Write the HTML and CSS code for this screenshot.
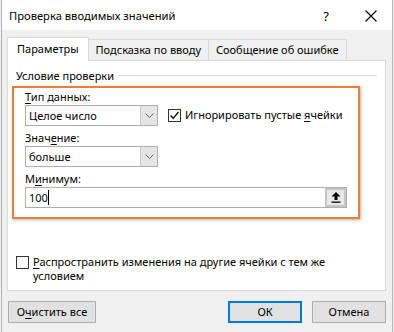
FILE: index.html
```html
<!DOCTYPE html>
<html lang="ru">
<head>
<meta charset="utf-8">
<title>Проверка вводимых значений</title>
<link rel="stylesheet" href="styles.css">
</head>
<body>
<div class="window">
  <div class="titlebar">
    <span class="title">Проверка вводимых значений</span>
    <span class="help">?</span>
    <svg class="close" width="12" height="12" viewBox="0 0 12 12"><path d="M0.5 0.5 L11.5 11.5 M11.5 0.5 L0.5 11.5" stroke="#000" stroke-width="1.1" fill="none"/></svg>
  </div>
  <div class="content">
    <div class="tabs">
      <div class="tab active">Параметры</div>
      <div class="tab">Подсказка по вводу</div>
      <div class="tab">Сообщение об ошибке</div>
    </div>
    <div class="panel">
      <div class="group-head">
        <span class="group-label">Условие проверки</span>
        <span class="group-line"></span>
      </div>
      <div class="highlight">
        <div class="label"><u>Т</u>ип данных:</div>
        <div class="row">
          <div class="combo">
            <span class="combo-text">Целое число</span>
            <span class="combo-btn"><svg width="9" height="5" viewBox="0 0 9 5"><polyline points="0.5,0.5 4.5,4.5 8.5,0.5" fill="none" stroke="#606060" stroke-width="1"/></svg></span>
          </div>
          <div class="check-line">
            <span class="checkbox"><svg width="11" height="11" viewBox="0 0 11 11"><polyline points="1.5,5.5 4.2,8.3 9.5,2" fill="none" stroke="#000" stroke-width="1.3"/></svg></span>
            <span>Игнорировать пустые <u>я</u>чейки</span>
          </div>
        </div>
        <div class="label">Знач<u>е</u>ние:</div>
        <div class="combo">
          <span class="combo-text">больше</span>
          <span class="combo-btn"><svg width="9" height="5" viewBox="0 0 9 5"><polyline points="0.5,0.5 4.5,4.5 8.5,0.5" fill="none" stroke="#606060" stroke-width="1"/></svg></span>
        </div>
        <div class="label">М<u>и</u>нимум:</div>
        <div class="input">
          <span class="input-text">100</span><span class="caret"></span>
          <span class="ref-btn"><svg width="10" height="11" viewBox="0 0 10 11"><path d="M5 0 L9.5 4.5 L6.5 4.5 L6.5 8 L3.5 8 L3.5 4.5 L0.5 4.5 Z" fill="#000"/><rect x="0.5" y="9.5" width="9" height="1.3" fill="#000"/></svg></span>
        </div>
      </div>
      <div class="apply">
        <span class="checkbox empty"></span>
        <span class="apply-text"><u>Р</u>аспространить изменения на другие ячейки с тем же условием</span>
      </div>
    </div>
    <div class="buttons">
      <div class="btn clear">О<u>ч</u>истить все</div>
      <div class="spacer"></div>
      <div class="btn default">ОК</div>
      <div class="btn">Отмена</div>
    </div>
  </div>
</div>
</body>
</html>
```
FILE: styles.css
```css
* { box-sizing: border-box; }
html, body { margin: 0; padding: 0; background: #f0f0f0; }
body {
  font-family: "Noto Sans", "Open Sans", sans-serif;
  font-size: 11px;
  color: #000;
}
u { text-decoration: underline; text-underline-offset: 2px; text-decoration-thickness: 1px; }
.window {
  margin-left: 1px;
  width: 392px;
  height: 332px;
  border-left: 1px solid #b4b4b4;
  border-right: 1px solid #b4b4b4;
  background: #f0f0f0;
}
.titlebar {
  height: 30px;
  background: #fff;
  display: flex;
  align-items: center;
  padding-left: 7px;
  padding-top: 1px;
}
.title { flex: 1; font-size: 11.2px; }
.help { font-size: 13px; margin-right: 36px; }
.close { margin-right: 15px; }
.content { padding: 7px 6px 0 5px; }
.tabs {
  display: flex;
  align-items: flex-end;
  height: 23px;
}
.tab {
  height: 21px;
  border: 1px solid #d9d9d9;
  border-bottom: none;
  margin-left: -1px;
  padding: 0 7px;
  line-height: 19px;
  background: #f0f0f0;
  white-space: nowrap;
}
.tab.active {
  margin-left: 0;
  height: 24px;
  margin-bottom: -1px;
  background: #fff;
  padding: 0 9px;
  line-height: 22px;
  position: relative;
  z-index: 1;
}
.panel {
  height: 231px;
  background: #fff;
  border: 1px solid #d9d9d9;
  padding: 7px 6px 7px 4px;
  display: flex;
  flex-direction: column;
}
.group-head {
  display: flex;
  align-items: center;
  height: 16px;
  padding-left: 4px;
}
.group-label { line-height: 16px; }
.group-line { flex: 1; height: 1px; background: #dcdcdc; margin-left: 4px; margin-right: 2px; margin-top: -1px; }
.highlight {
  margin-top: 2px;
  width: 348px;
  height: 133px;
  border: 2px solid #ed7d31;
  box-shadow: 1px 1px 3px rgba(0,0,0,0.3);
  padding: 1px 10px 0 11px;
}
.label { line-height: 16px; height: 16px; }
.highlight .label:not(:first-child) { margin-top: 4px; }
.row { display: flex; align-items: flex-start; }
.combo {
  width: 133px;
  height: 21px;
  border: 1px solid #adadad;
  display: flex;
  background: #fff;
}
.combo-text { flex: 1; padding-left: 3px; line-height: 19px; }
.combo-btn {
  width: 17px;
  background: #e5e5e5;
  border-left: 1px solid #c8c8c8;
  display: flex;
  align-items: center;
  justify-content: center;
}
.check-line {
  display: flex;
  align-items: center;
  margin-left: 10px;
  margin-top: 2px;
  line-height: 16px;
  white-space: nowrap;
}
.checkbox {
  width: 13px;
  height: 13px;
  border: 1px solid #333;
  background: #fff;
  display: inline-flex;
  align-items: center;
  justify-content: center;
  margin-right: 4px;
  flex: none;
}
.input {
  width: 322px;
  height: 21px;
  border: 1px solid #adadad;
  display: flex;
  align-items: center;
  background: #fff;
}
.input-text { padding-left: 3px; line-height: 19px; }
.caret { width: 1px; height: 15px; background: #000; }
.ref-btn {
  margin-left: auto;
  width: 21px;
  height: 19px;
  background: #e8e8e8;
  border: 2px solid #c6c6c6;
  display: flex;
  align-items: center;
  justify-content: center;
}
.apply {
  margin-top: auto;
  display: flex;
  align-items: flex-start;
  padding-left: 4px;
}
.apply .checkbox { margin-top: 1px; }
.apply-text { line-height: 14px; width: 310px; }
.buttons {
  display: flex;
  margin-top: 10px;
  padding-left: 1px;
}
.spacer { flex: 1; }
.btn {
  width: 74px;
  height: 22px;
  border: 1px solid #adadad;
  background: #e1e1e1;
  text-align: center;
  line-height: 20px;
  margin-left: 10px;
}
.btn.clear { width: 88px; margin-left: 0; }
.btn.default { border: 2px solid #0078d7; line-height: 18px; margin-left: 0; }
```
